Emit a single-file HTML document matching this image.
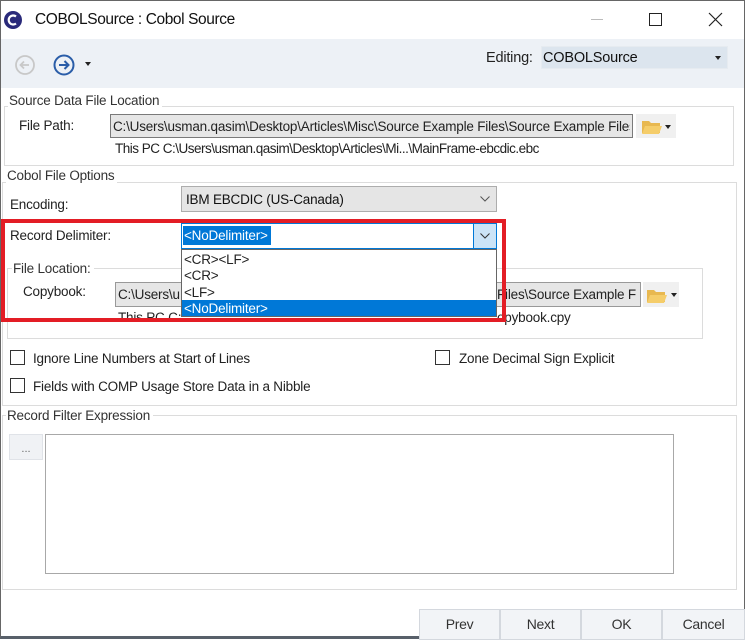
<!DOCTYPE html>
<html><head><style>
*{box-sizing:border-box;margin:0;padding:0}
body{width:745px;height:639px;overflow:hidden;background:#fff;font-family:"Liberation Sans",sans-serif;font-size:13px;color:#222;position:relative}
.a{position:absolute;white-space:nowrap}
.t{font-size:13.5px;letter-spacing:-0.2px}
.g{position:absolute;border:1px solid #dcdcdc}
.lg{position:absolute;background:#fff;padding:0 3px 0 1px;color:#333;font-size:13.5px;letter-spacing:-0.2px}
.cb{position:absolute;width:15px;height:15px;border:1px solid #333;background:#fff}
.btn{position:absolute;top:609px;height:31px;background:#f2f4f7;border:1px solid #d4d8de;text-align:center;line-height:29px;font-size:14px;letter-spacing:-0.3px;color:#333}
</style></head><body>
<div class="a" style="left:0;top:0;width:745px;height:639px;border:1px solid #666;border-bottom:3px solid #58606a"></div>
<svg class="a" style="left:3px;top:10px" width="20" height="20"><circle cx="10" cy="10" r="9" fill="#2a2a7a"/><path d="M13 6.5 A4.5 4.5 0 1 0 13 13.5" stroke="#fff" stroke-width="2.2" fill="none"/></svg>
<div class="a" style="left:35px;top:11px;font-size:15.5px;letter-spacing:-0.4px;color:#111">COBOLSource : Cobol Source</div>
<div class="a" style="left:591px;top:19px;width:12px;height:1px;background:#bbb"></div>
<div class="a" style="left:649px;top:13px;width:13px;height:13px;border:1px solid #222"></div>
<svg class="a" style="left:708px;top:12px" width="15" height="15"><path d="M1 1L14 14M14 1L1 14" stroke="#222" stroke-width="1.2"/></svg>
<div class="a" style="left:1px;top:39px;width:743px;height:49px;background:#edf1f6"></div>
<svg class="a" style="left:14px;top:54px" width="22" height="22"><circle cx="11" cy="11" r="9" fill="none" stroke="#c8c8c8" stroke-width="1.8"/><path d="M15 11H7M10 7.5L6.5 11L10 14.5" stroke="#c8c8c8" stroke-width="1.8" fill="none"/></svg>
<svg class="a" style="left:52px;top:53px" width="24" height="24"><circle cx="12" cy="12" r="9.5" fill="none" stroke="#2a5da8" stroke-width="2"/><path d="M7 12H16M12.5 8L16.5 12L12.5 16" stroke="#2a5da8" stroke-width="2" fill="none"/></svg>
<div class="a" style="left:85px;top:62px;border:3px solid transparent;border-top:4px solid #222"></div>
<div class="a t" style="left:486px;top:50px;font-size:14.5px">Editing:</div>
<div class="a" style="left:541px;top:46px;width:187px;height:23px;background:#dce5ee;border:1px solid #e6ebf0"></div>
<div class="a t" style="left:543px;top:50px;font-size:14.5px;color:#111">COBOLSource</div>
<div class="a" style="left:715px;top:56px;border:3px solid transparent;border-top:4px solid #222"></div>
<div class="g" style="left:4px;top:106px;width:730px;height:60px"></div>
<div class="lg" style="left:8px;top:93px">Source Data File Location</div>
<div class="a t" style="left:19px;top:118px">File Path:</div>
<div class="a" style="left:110px;top:114px;width:523px;height:24px;background:#e6e6e6;border:1px solid #7a7a7a"></div>
<div class="a t" style="left:113px;top:119px;width:517px;overflow:hidden;color:#222">C:\Users\usman.qasim\Desktop\Articles\Misc\Source Example Files\Source Example Files</div>
<div class="a" style="left:636px;top:114px;width:40px;height:24px;background:#f0f0f0"></div>
<svg class="a" style="left:641px;top:118px" width="22" height="17"><path d="M1 3h7l2 2h9v10H1z" fill="#e8b850"/><path d="M4 8h17l-3 8H1z" fill="#f5cd6a"/></svg>
<div class="a" style="left:665px;top:125px;border:3px solid transparent;border-top:4px solid #222"></div>
<div class="a t" style="left:115px;top:141px;color:#222;letter-spacing:-0.5px">This PC C:\Users\usman.qasim\Desktop\Articles\Mi...\MainFrame-ebcdic.ebc</div>
<div class="g" style="left:2px;top:182px;width:735px;height:224px"></div>
<div class="lg" style="left:6px;top:168px">Cobol File Options</div>
<div class="a t" style="left:10px;top:197px">Encoding:</div>
<div class="a" style="left:181px;top:186px;width:316px;height:26px;background:#e5e5e5;border:1px solid #adadad"></div>
<div class="a t" style="left:186px;top:192px;color:#111">IBM EBCDIC (US-Canada)</div>
<svg class="a" style="left:480px;top:196px" width="10" height="6"><path d="M0.5 0.5L5 5L9.5 0.5" stroke="#555" fill="none"/></svg>
<div class="g" style="left:7px;top:268px;width:696px;height:71px"></div>
<div class="lg" style="left:12px;top:261px">File Location:</div>
<div class="a t" style="left:23px;top:284px">Copybook:</div>
<div class="a" style="left:115px;top:282px;width:526px;height:25px;background:#e6e6e6;border:1px solid #999"></div>
<div class="a t" style="left:118px;top:287px">C:\Users\u</div>
<div class="a t" style="left:497px;top:287px">Files\Source Example F</div>
<div class="a" style="left:643px;top:282px;width:36px;height:25px;background:#f0f0f0"></div>
<svg class="a" style="left:646px;top:287px" width="22" height="17"><path d="M1 3h7l2 2h9v10H1z" fill="#e8b850"/><path d="M4 8h17l-3 8H1z" fill="#f5cd6a"/></svg>
<div class="a" style="left:671px;top:293px;border:3px solid transparent;border-top:4px solid #222"></div>
<div class="a t" style="left:118px;top:310px">This PC C:</div>
<div class="a t" style="left:497px;top:310px">opybook.cpy</div>
<div class="a t" style="left:10px;top:228px">Record Delimiter:</div>
<div class="a" style="left:181px;top:223px;width:316px;height:26px;background:#fff;border:1px solid #0078d7"></div>
<div class="a" style="left:183px;top:226px;width:88px;height:19px;background:#0078d7"></div>
<div class="a t" style="left:184px;top:228px;color:#fff">&lt;NoDelimiter&gt;</div>
<div class="a" style="left:473px;top:224px;width:23px;height:24px;background:#cce4f7;border-left:1px solid #0078d7"></div>
<svg class="a" style="left:480px;top:233px" width="10" height="6"><path d="M0.5 0.5L5 5L9.5 0.5" stroke="#333" fill="none"/></svg>
<div class="a" style="left:181px;top:249px;width:316px;height:68px;background:#fff;border:1px solid #666"></div>
<div class="a t" style="left:184px;top:252px">&lt;CR&gt;&lt;LF&gt;</div>
<div class="a t" style="left:184px;top:268px">&lt;CR&gt;</div>
<div class="a t" style="left:184px;top:285px">&lt;LF&gt;</div>
<div class="a" style="left:182px;top:300px;width:314px;height:16px;background:#0078d7"></div>
<div class="a t" style="left:184px;top:301px;color:#fff">&lt;NoDelimiter&gt;</div>
<div class="a" style="left:1px;top:219px;width:505px;height:103px;border:4px solid #e31d25"></div>
<div class="cb" style="left:10px;top:350px"></div>
<div class="a t" style="left:33px;top:351px">Ignore Line Numbers at Start of Lines</div>
<div class="cb" style="left:435px;top:350px"></div>
<div class="a t" style="left:459px;top:351px">Zone Decimal Sign Explicit</div>
<div class="cb" style="left:10px;top:378px"></div>
<div class="a t" style="left:33px;top:379px">Fields with COMP Usage Store Data in a Nibble</div>
<div class="g" style="left:2px;top:415px;width:735px;height:175px"></div>
<div class="lg" style="left:6px;top:408px">Record Filter Expression</div>
<div class="a" style="left:9px;top:434px;width:34px;height:26px;background:#f0f2f5;border:1px solid #e0e3e8;text-align:center;font-size:11px;color:#666;line-height:28px">...</div>
<div class="a" style="left:45px;top:434px;width:629px;height:140px;border:1px solid #a8a8a8"></div>
<div class="btn" style="left:419px;width:81px">Prev</div>
<div class="btn" style="left:500px;width:81px">Next</div>
<div class="btn" style="left:581px;width:81px">OK</div>
<div class="btn" style="left:662px;width:83px">Cancel</div>
</body></html>
